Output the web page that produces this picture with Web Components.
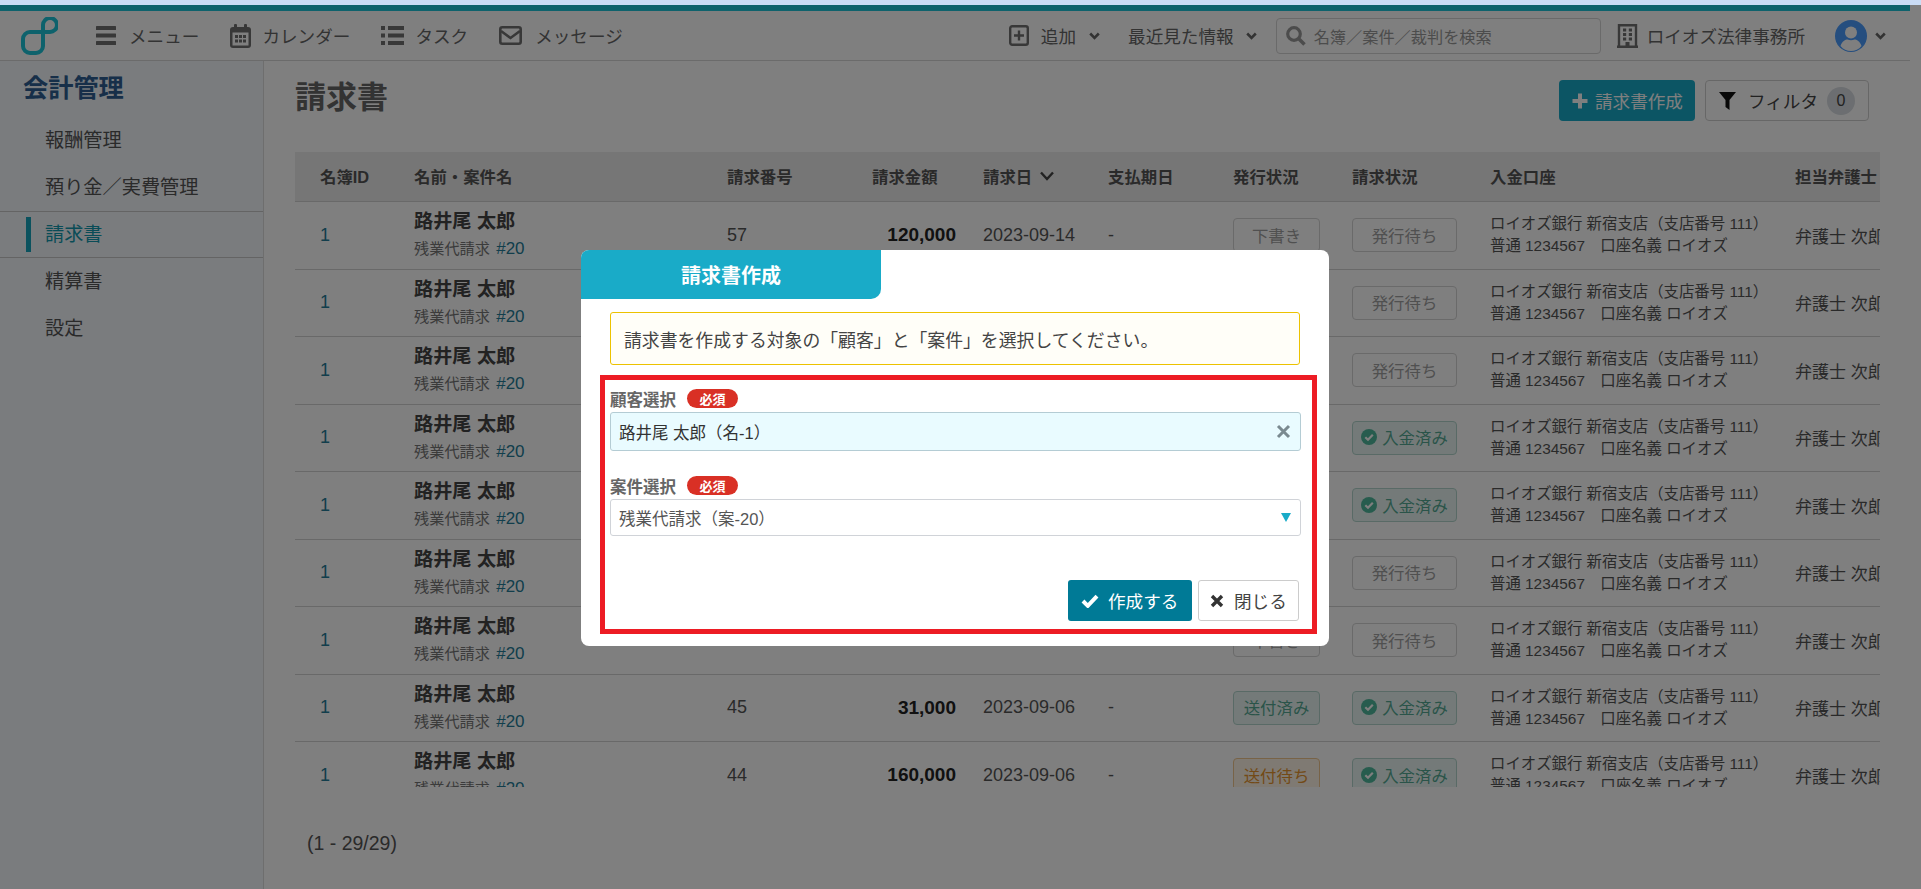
<!DOCTYPE html>
<html lang="ja">
<head>
<meta charset="utf-8">
<title>請求書</title>
<style>
html,body{margin:0;padding:0;height:100%;overflow:hidden;background:#fff}
body{font-family:"Liberation Sans","Noto Sans CJK JP",sans-serif;color:#555}
</style>
</head>
<body>
<app-shell>
  <app-header slot="header"></app-header>
  <side-nav slot="side" title="会計管理">
    <nav-item>報酬管理</nav-item>
    <nav-item>預り金／実費管理</nav-item>
    <nav-item active>請求書</nav-item>
    <nav-item>精算書</nav-item>
    <nav-item>設定</nav-item>
  </side-nav>
  <invoice-page slot="main"></invoice-page>
  <modal-overlay slot="overlay">
    <invoice-dialog></invoice-dialog>
  </modal-overlay>
</app-shell>

<script>
const ICON = {
  logo:'<svg width="37" height="38" viewBox="21 16 37 38"><path fill="none" stroke="#1cc4d8" stroke-width="4" d="M30 31H50A7 7 0 1 0 43 24V45A7 7 0 0 1 36 52H30A7 7 0 0 1 23 45V38A7 7 0 0 1 30 31Z"/></svg>',
  menu:'<svg width="20" height="19" viewBox="0 0 20 19" fill="#707070"><rect width="20" height="4" rx=".5"/><rect y="7.5" width="20" height="4" rx=".5"/><rect y="15" width="20" height="4" rx=".5"/></svg>',
  cal:'<svg width="21" height="24" viewBox="0 0 21 24"><rect y="3" width="21" height="21" rx="3" fill="#707070"/><rect x="4" width="3" height="6" rx="1" fill="#707070"/><rect x="14" width="3" height="6" rx="1" fill="#707070"/><rect x="2.5" y="8.5" width="16" height="13" fill="#fff"/><g fill="#707070"><rect x="5" y="11" width="3" height="3"/><rect x="9" y="11" width="3" height="3"/><rect x="13" y="11" width="3" height="3"/><rect x="5" y="15.5" width="3" height="3"/><rect x="9" y="15.5" width="3" height="3"/><rect x="13" y="15.5" width="3" height="3"/></g></svg>',
  list:'<svg width="23" height="19" viewBox="0 0 23 19" fill="#707070"><rect width="4" height="4"/><rect y="7.5" width="4" height="4"/><rect y="15" width="4" height="4"/><rect x="7" width="16" height="4"/><rect x="7" y="7.5" width="16" height="4"/><rect x="7" y="15" width="16" height="4"/></svg>',
  mail:'<svg width="23" height="19" viewBox="0 0 23 19"><rect x="1.3" y="1.3" width="20.4" height="16.4" rx="2" fill="none" stroke="#707070" stroke-width="2.6"/><path d="M2 5l9.5 7L21 5" fill="none" stroke="#707070" stroke-width="2.6"/></svg>',
  plusbox:'<svg width="20" height="21" viewBox="0 0 20 21"><rect x="1.2" y="1.2" width="17.6" height="18.6" rx="2" fill="none" stroke="#707070" stroke-width="2.4"/><path d="M10 5.5v10M5 10.5h10" stroke="#707070" stroke-width="2.4"/></svg>',
  chev:'<svg width="11" height="8" viewBox="0 0 11 8"><path d="M1.2 1.5L5.5 5.8 9.8 1.5" fill="none" stroke="#666" stroke-width="2.6"/></svg>',
  search:'<svg width="20" height="20" viewBox="0 0 20 20"><circle cx="8" cy="8" r="6.3" fill="none" stroke="#999" stroke-width="3.2"/><path d="M12.5 12.5L18.5 18.5" stroke="#999" stroke-width="3.6"/></svg>',
  bldg:'<svg width="21" height="24" viewBox="0 0 21 24"><path d="M2 23V1.200h17V23" fill="none" stroke="#707070" stroke-width="2.400"/><rect y="21.500" width="21" height="2.500" fill="#707070"/><g fill="#707070"><rect x="6" y="4.500" width="3.200" height="3"/><rect x="11.800" y="4.500" width="3.200" height="3"/><rect x="6" y="9" width="3.200" height="3"/><rect x="11.800" y="9" width="3.200" height="3"/><rect x="6" y="13.500" width="3.200" height="3"/><rect x="11.800" y="13.500" width="3.200" height="3"/><rect x="8.500" y="18" width="4" height="4"/></g></svg>',
  avatar:'<svg width="32" height="32" viewBox="0 0 32 32"><circle cx="16" cy="16" r="16" fill="#4a9cff"/><circle cx="16" cy="12.500" r="6" fill="#fff"/><path d="M5.500 26c1.500-5 5-6.500 7-6.500 2 1 5 1 7 0 2 0 5.500 1.500 7 6.500C24 29.500 20 31 16 31S8 29.500 5.500 26z" fill="#fff"/></svg>',
  plus:'<svg width="16" height="16" viewBox="0 0 16 16"><path d="M8 .5v15M.5 8h15" stroke="#fff" stroke-width="4"/></svg>',
  funnel:'<svg width="17" height="18" viewBox="0 0 17 18"><path d="M0 0H17L10.500 8V18L6.500 15V8Z" fill="#111"/></svg>',
  checkc:'<svg width="16" height="16" viewBox="0 0 16 16"><circle cx="8" cy="8" r="8" fill="#4fb89c"/><path d="M4.300 8.200L7 10.800l4.800-5" fill="none" stroke="#fff" stroke-width="2.200"/></svg>',
  check:'<svg width="18" height="14" viewBox="0 0 18 14"><path d="M2 7l4.800 4.800L16 2.200" fill="none" stroke="#fff" stroke-width="4"/></svg>',
  x:'<svg width="14" height="14" viewBox="0 0 14 14"><path d="M2 2l10 10M12 2L2 12" stroke="#333" stroke-width="3.400"/></svg>',
  xg:'<svg width="15" height="15" viewBox="0 0 15 15"><path d="M2 2l11 11M13 2L2 13" stroke="#7a8a90" stroke-width="3"/></svg>',
  tri:'<svg width="10" height="9" viewBox="0 0 10 9"><path d="M0 0H10L5 9Z" fill="#19abc8"/></svg>',
  sort:'<svg width="14" height="10" viewBox="0 0 14 10"><path d="M1 1.500l6 6.500 6-6.500" fill="none" stroke="#444" stroke-width="2.400"/></svg>'
};

function comp(name, render){
  customElements.define(name, class extends HTMLElement{
    constructor(){super();this.attachShadow({mode:'open'});}
    connectedCallback(){this.shadowRoot.innerHTML=render(this);}
  });
}

comp('app-shell',()=>`<style>
:host{display:block;position:relative;height:889px;overflow:hidden;background:#fff}
.strip{height:5px;background:#cadcf5}
.page{width:1910px}
.top{height:6px;background:#1cc4d8}
.body{display:flex;height:828px}
</style>
<div class="strip"></div>
<div class="page">
<div class="top"></div>
<slot name="header"></slot>
<div class="body"><slot name="side"></slot><slot name="main"></slot></div>
</div>
<slot name="overlay"></slot>`);

comp('head-link',el=>`<style>
:host{display:flex;align-items:center;font-size:17.6px;color:#666;white-space:nowrap;gap:var(--g,11px)}
svg{display:block}
</style><slot></slot>`);

comp('app-header',()=>`<style>
:host{display:flex;align-items:center;height:49px;border-bottom:1px solid #d6d6d6;box-sizing:content-box;padding:0 24px 0 21px;background:#fff}
svg{display:block}
.logo{margin-right:38px}
.left{display:flex;align-items:center;gap:31px}
.right{margin-left:auto;display:flex;align-items:center}
.search{width:325px;height:36px;box-sizing:border-box;border:1px solid #d4d4d4;border-radius:4px;display:flex;align-items:center;gap:8px;padding-left:9px;font-size:16.2px;color:#999;margin:0 16px 0 19px;white-space:nowrap}
</style>
<div class="logo">${ICON.logo}</div>
<div class="left">
<head-link style="--g:13px">${ICON.menu}<span>メニュー</span></head-link>
<head-link style="--g:11px">${ICON.cal}<span>カレンダー</span></head-link>
<head-link style="--g:11px">${ICON.list}<span>タスク</span></head-link>
<head-link style="--g:13px">${ICON.mail}<span>メッセージ</span></head-link>
</div>
<div class="right">
<head-link style="--g:12px;margin-right:28px">${ICON.plusbox}<span style="margin-right:1px">追加</span>${ICON.chev}</head-link>
<head-link style="--g:12px"><span>最近見た情報</span>${ICON.chev}</head-link>
<div class="search">${ICON.search}<span>名簿／案件／裁判を検索</span></div>
<head-link style="--g:9px;margin-right:30px">${ICON.bldg}<span>ロイオズ法律事務所</span></head-link>
<head-link style="--g:8px">${ICON.avatar}${ICON.chev}</head-link>
</div>`);

comp('side-nav',el=>`<style>
:host{display:block;width:264px;box-sizing:border-box;background:#f4f8fd;border-right:1px solid #dcdcdc;flex:none}
h2{margin:0;height:56px;display:flex;align-items:center;padding-left:23px;font-size:25.2px;line-height:1;font-weight:700;color:#2e5f92}
</style><h2>${el.getAttribute('title')}</h2><slot></slot>`);

comp('nav-item',el=>{const a=el.hasAttribute('active');return `<style>
:host{display:flex;align-items:center;box-sizing:border-box;height:47px;padding:0 0 3px 45px;font-size:19.2px;color:#555;position:relative;${a?'color:#1298ae;border-top:1px solid #c8c8c8;border-bottom:1px solid #c8c8c8;':''}}
i{position:absolute;left:26px;top:5px;bottom:5px;width:5px;background:#16a5bc}
</style>${a?'<i></i>':''}<slot></slot>`;});

comp('action-button',el=>{const p=el.getAttribute('kind')==='primary';return `<style>
:host{display:inline-flex;align-items:center;box-sizing:border-box;height:41px;border-radius:4px;font-size:17.6px;white-space:nowrap;
${p?'background:#19abc8;color:#fff;padding:0 12px 0 13px;gap:7px;':'background:#fff;color:#444;border:1px solid #cfcfcf;padding:0 13px;gap:12px;'}}
::slotted(svg){display:block}
</style><slot></slot>`;});

const COLS='94px 313px 145px 111px 125px 125px 119px 138px 305px 100px';

comp('invoice-page',()=>{
/* Rows 2 to 7 sit behind the dialog: their number, amount and date are not visible in the picture. */
const rows=[
['57','120,000','2023-09-14','-','下書き','draft','発行待ち','wait'],
['','','','','下書き','draft','発行待ち','wait'],
['','','','','下書き','draft','発行待ち','wait'],
['','','','','送付済み','sent','入金済み','paid'],
['','','','','送付済み','sent','入金済み','paid'],
['','','','','下書き','draft','発行待ち','wait'],
['','','','','下書き','draft','発行待ち','wait'],
['45','31,000','2023-09-06','-','送付済み','sent','入金済み','paid'],
['44','160,000','2023-09-06','-','送付待ち','pending','入金済み','paid']
];
return `<style>
:host{display:block;flex:1;min-width:0;padding:0 30px 0 31px;background:#fff}
.title{display:flex;height:91px;box-sizing:border-box;padding:19px 11px 0 0;gap:10px;align-items:flex-start}
h1{margin:-1px auto 0 0;font-size:31px;line-height:37px;font-weight:700;color:#666}
.count{width:28px;height:28px;border-radius:50%;background:#d8dde2;display:flex;align-items:center;justify-content:center;font-size:16px;color:#444;margin-left:-3px}
.table{height:635px;overflow:hidden}
.foot{margin:44px 0 0 12px;font-size:19.5px;line-height:24px;color:#555}
</style>
<div class="title"><h1>請求書</h1>
<action-button kind="primary">${ICON.plus}<span>請求書作成</span></action-button>
<action-button>${ICON.funnel}<span>フィルタ</span><span class="count">0</span></action-button></div>
<div class="table">
<table-head></table-head>
${rows.map(r=>`<invoice-row no="${r[0]}" amt="${r[1]}" date="${r[2]}" pay="${r[3]}" st1="${r[4]}" k1="${r[5]}" st2="${r[6]}" k2="${r[7]}"></invoice-row>`).join('')}
</div>
<div class="foot">(1 - 29/29)</div>`;});

comp('table-head',()=>`<style>
:host{display:grid;grid-template-columns:${COLS};align-items:center;height:50px;box-sizing:border-box;padding:0 0 2px 25px;background:#ececec;border-bottom:1px solid #d2d2d2;font-size:16.4px;font-weight:700;color:#555;white-space:nowrap;overflow:hidden}
span{display:flex;align-items:center;gap:8px}
</style><span>名簿ID</span><span>名前・案件名</span><span>請求番号</span><span>請求金額</span><span>請求日${ICON.sort}</span><span>支払期日</span><span>発行状況</span><span>請求状況</span><span>入金口座</span><span>担当弁護士</span>`);

comp('status-badge',el=>{
const k=el.getAttribute('kind');
const s={draft:'color:#a0a0a0;border-color:#d4d4d4;background:#fff;min-width:87px',
wait:'color:#a0a0a0;border-color:#d4d4d4;background:#fff;min-width:105px',
sent:'color:#54a892;border-color:#b2d4cc;background:#e8f5f3;min-width:87px',
paid:'color:#54a892;border-color:#b2d4cc;background:#e8f5f3;min-width:105px',
pending:'color:#e6952e;border-color:#f1c68e;background:#fff4e6;min-width:87px'}[k];
return `<style>
:host{display:inline-flex;align-items:center;justify-content:center;gap:5px;height:34px;box-sizing:border-box;border:1px solid;border-radius:4px;font-size:16.4px;white-space:nowrap;padding-bottom:1px;${s}}
svg{display:block}
</style>${k==='paid'?ICON.checkc:''}<slot></slot>`;});

comp('invoice-row',el=>{const a=n=>el.getAttribute(n);return `<style>
:host{display:grid;grid-template-columns:${COLS};align-items:center;height:67.500px;box-sizing:border-box;padding-left:25px;background:#fff;border-bottom:1px solid #d2d2d2;font-size:18px;color:#555;white-space:nowrap;overflow:hidden}
.id,.link{color:#247c98}
.nm{font-size:19.200px;line-height:27px;font-weight:700;color:#444}
.sub{font-size:15.200px;line-height:27px;color:#777}
.link{font-size:17px;margin-left:2px}
.amt{text-align:right;padding-right:27px;font-size:19px;font-weight:700;color:#222}
.bank{font-size:15.400px;line-height:22px}
.law{font-size:17px}
</style>
<div class="id">1</div>
<div><div class="nm">路井尾 太郎</div><div class="sub">残業代請求 <span class="link">#20</span></div></div>
<div>${a('no')}</div>
<div class="amt">${a('amt')}</div>
<div>${a('date')}</div>
<div>${a('pay')}</div>
<div><status-badge kind="${a('k1')}">${a('st1')}</status-badge></div>
<div><status-badge kind="${a('k2')}">${a('st2')}</status-badge></div>
<div class="bank">ロイオズ銀行 新宿支店（支店番号 111）<br>普通 1234567　口座名義 ロイオズ</div>
<div class="law">弁護士 次郎</div>`;});

comp('modal-overlay',()=>`<style>
:host{position:absolute;left:0;right:0;top:5px;bottom:0;background:rgba(0,0,0,.5);display:flex;justify-content:center;align-items:flex-start;box-sizing:border-box;padding:245px 11px 0 0}
</style><slot></slot>`);

comp('req-field',el=>`<style>
:host{display:block}
.lab{display:flex;align-items:center;gap:11px;height:19px;font-size:16.500px;font-weight:700;color:#666;margin-bottom:4px}
.req{width:51px;height:19px;border-radius:10px;background:#d93025;color:#fff;font-size:13px;font-weight:700;display:flex;align-items:center;justify-content:center}
.box{display:flex;align-items:center;justify-content:space-between;box-sizing:border-box;height:${el.getAttribute('h')}px;border:1px solid;border-radius:3px;padding:0 9px 0 8px;font-size:16.500px;${el.getAttribute('kind')==='filled'?'background:#e9fbff;border-color:#b4ccd4;color:#333':'background:#fff;border-color:#d0d3d8;color:#555'}}
svg{display:block}
</style><div class="lab"><span>${el.getAttribute('label')}</span><span class="req">必須</span></div>
<div class="box"><span>${el.getAttribute('value')}</span>${el.getAttribute('kind')==='filled'?ICON.xg:ICON.tri}</div>`);

comp('invoice-dialog',()=>`<style>
:host{display:block;width:748px;height:396px;background:#fff;border-radius:8px;overflow:hidden;box-sizing:border-box}
.tab{width:300px;height:49px;background:#19abc8;border-radius:0 0 10px 0;display:flex;align-items:center;justify-content:center;color:#fff;font-size:20px;font-weight:700}
.note{box-sizing:border-box;margin:13px 29px 0;height:53px;border:1px solid #ecc200;border-radius:3px;background:#fffef8;display:flex;align-items:center;padding-left:13px;font-size:17.850px;color:#444;white-space:nowrap}
.form{box-sizing:border-box;height:259px;margin:10px 12px 0 19px;border:5px solid #ed1c24;padding:9px 11px 0 5px}
.second{margin-top:25px}
.btns{display:flex;justify-content:flex-end;gap:6px;margin:44px 2px 0 0}
.b{display:flex;align-items:center;box-sizing:border-box;height:41px;border-radius:3px;font-size:17.600px;white-space:nowrap}
.ok{width:124px;background:#007a96;color:#fff;padding-left:13px;gap:9px}
.no{width:101px;background:#fff;border:1px solid #ccc;color:#444;padding-left:11px;gap:10px}
svg{display:block}
</style>
<div class="tab">請求書作成</div>
<div class="note">請求書を作成する対象の「顧客」と「案件」を選択してください。</div>
<div class="form">
<req-field label="顧客選択" kind="filled" h="39" value="路井尾 太郎（名-1）"></req-field>
<req-field class="second" label="案件選択" kind="plain" h="37" value="残業代請求（案-20）"></req-field>
<div class="btns"><div class="b ok">${ICON.check}<span>作成する</span></div><div class="b no">${ICON.x}<span>閉じる</span></div></div>
</div>`);
</script>
</body>
</html>
